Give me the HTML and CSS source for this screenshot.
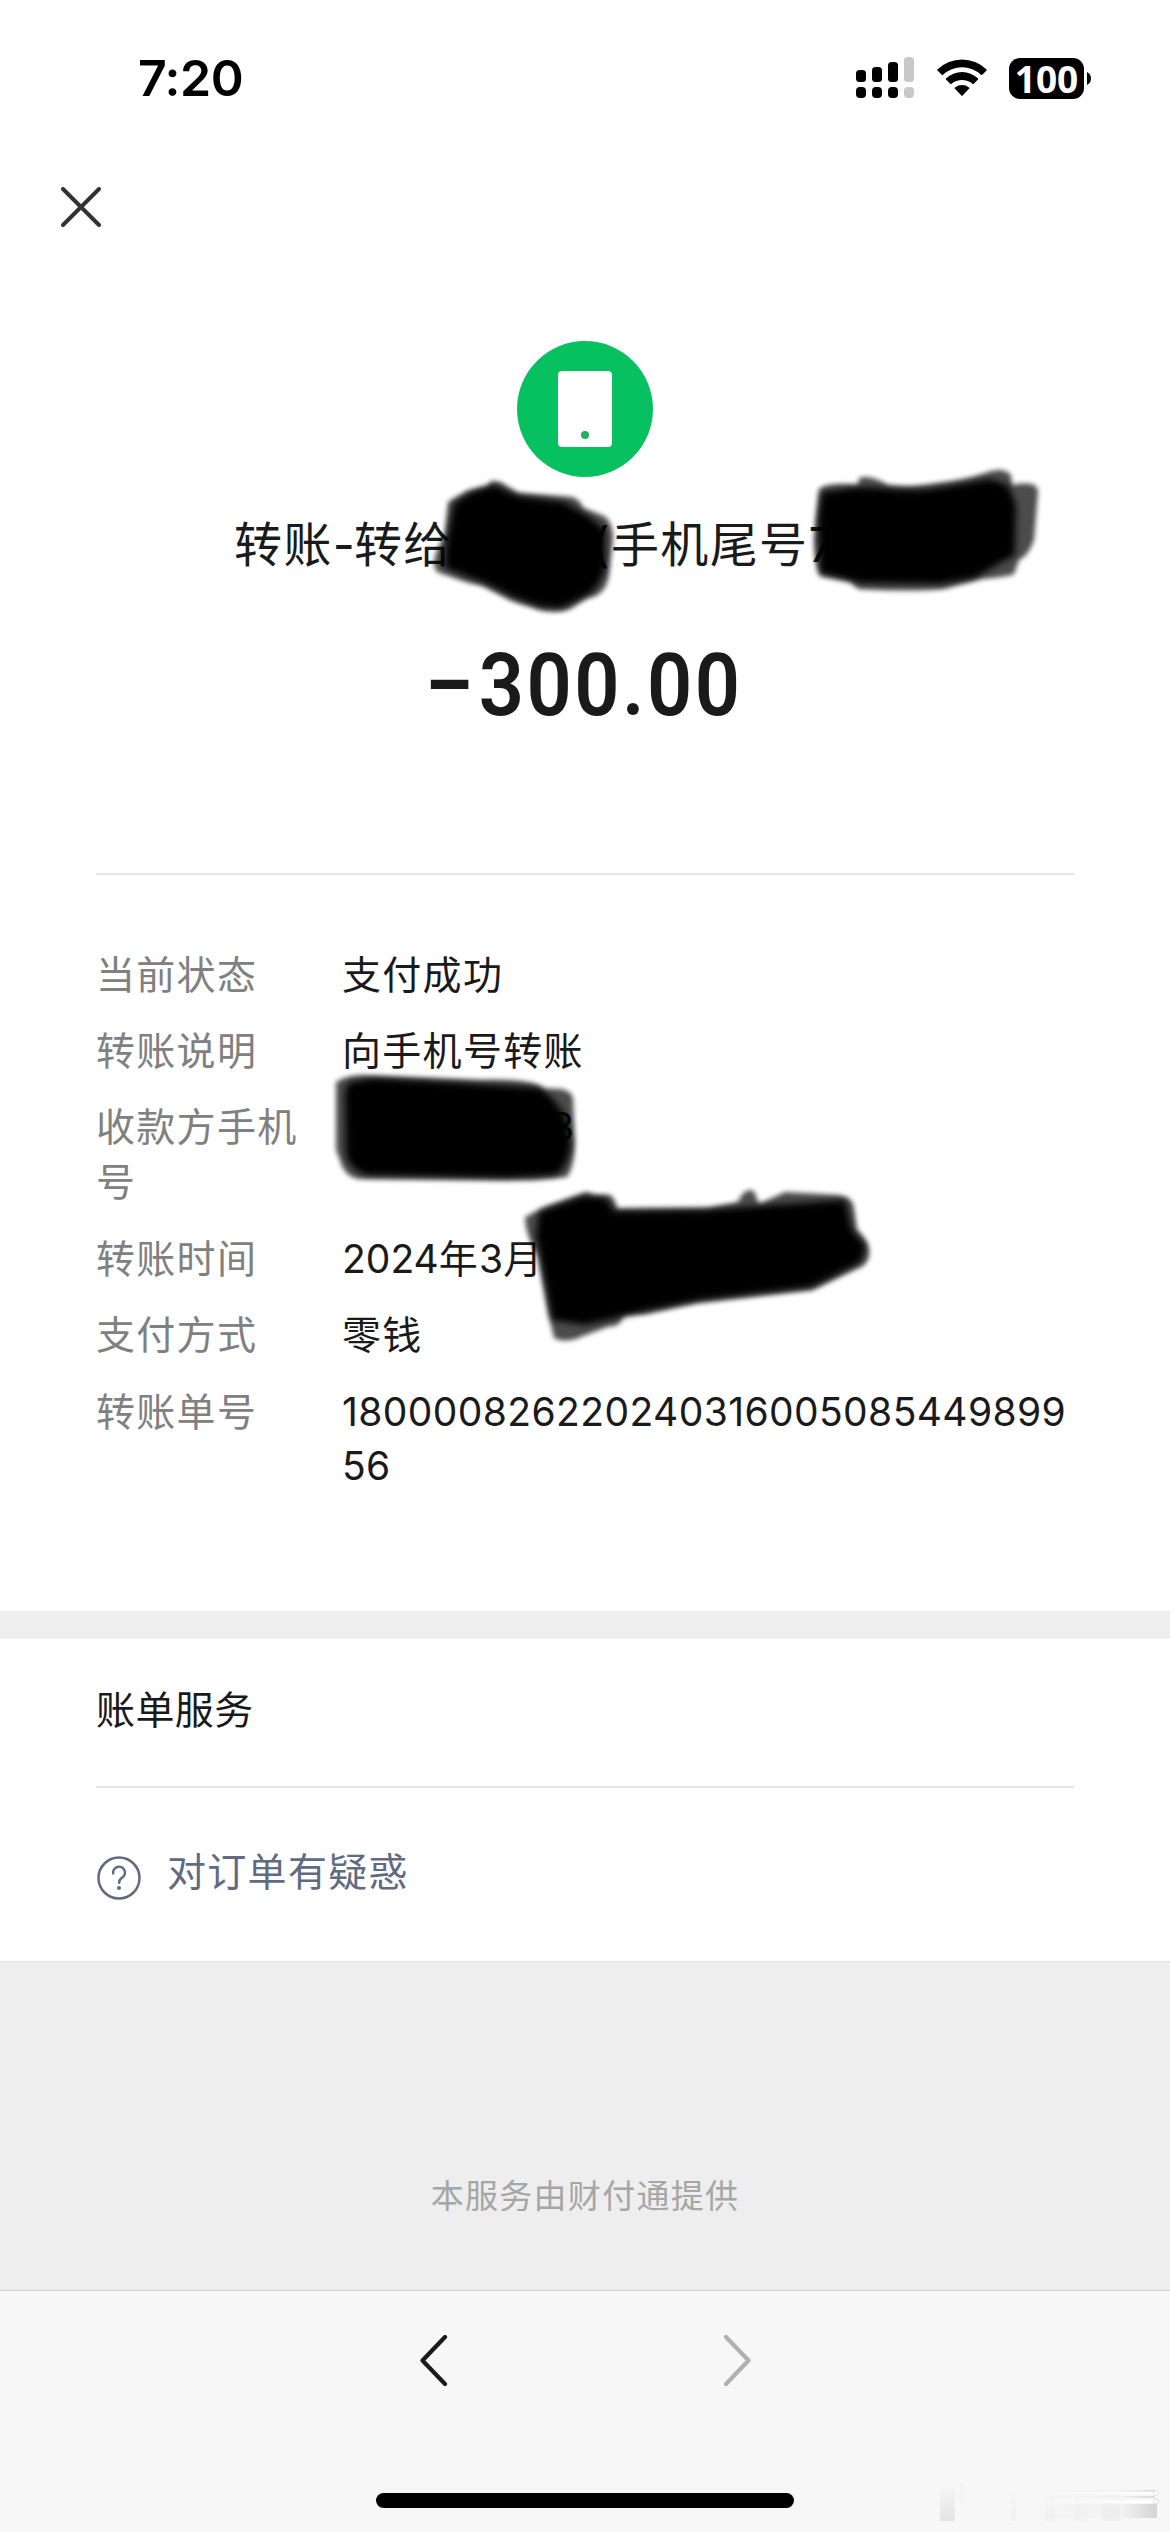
FILE: index.html
```html
<!DOCTYPE html>
<html lang="zh-CN">
<head>
<meta charset="utf-8">
<title>账单详情</title>
<link rel="stylesheet" href="styles.css">
</head>
<body>
<div class="screen">
  <header class="status-bar">
    <span class="clock">7:20</span>
    <div class="status-icons">
      <svg class="signal" width="60" height="42" viewBox="0 0 60 42">
        <rect x="0" y="13" width="10" height="12" rx="3.5"/>
        <rect x="16" y="10" width="10" height="15" rx="3.5"/>
        <rect x="32" y="5" width="10" height="20" rx="3.5"/>
        <rect x="48" y="0" width="10" height="25" rx="3.5" fill="#c8c8c8"/>
        <rect x="0" y="30" width="10" height="11" rx="4"/>
        <rect x="16" y="30" width="10" height="11" rx="4"/>
        <rect x="32" y="30" width="10" height="11" rx="4"/>
        <rect x="48" y="30" width="10" height="11" rx="4" fill="#c8c8c8"/>
      </svg>
      <svg class="wifi" width="50" height="38" viewBox="0 0 50 38">
        <path d="M0.500 11.500Q0 10.800 .7 10.200A35 35 0 0 1 49.300 10.200Q50 10.800 49.500 11.500L45.300 15.700Q44.700 16.200 44 15.700A28 28 0 0 0 6 15.700Q5.300 16.200 4.700 15.700Z"/>
        <path d="M9 20.500Q8.500 20 9.100 19.300A23.500 23.500 0 0 1 40.900 19.300Q41.500 20 41 20.500L36.800 24.700Q36.200 25.300 35.500 24.800A16.500 16.500 0 0 0 14.500 24.800Q13.800 25.300 13.200 24.700Z"/>
        <path d="M17.800 29.500Q17.400 28.900 18 28.400A11.500 11.500 0 0 1 32 28.400Q32.600 28.900 32.200 29.500L25.600 36.600Q25 37.200 24.400 36.600Z"/>
      </svg>
      <div class="battery"><span class="battery-level">100</span></div>
      <svg class="battery-nub" width="4" height="13" viewBox="0 0 4 13"><path d="M0 0Q4 2 4 6.500T0 13Z"/></svg>
    </div>
  </header>

  <nav class="nav-bar">
    <svg width="40" height="40" viewBox="0 0 40 40"><path d="M2 2L38 38M38 2L2 38" stroke="#333" stroke-width="4" stroke-linecap="round"/></svg>
  </nav>

  <section class="summary">
    <svg class="phone-icon" width="136" height="136" viewBox="0 0 136 136">
      <circle cx="68" cy="68" r="68" fill="#07c160"/>
      <rect x="41" y="30" width="54" height="76" rx="4" fill="#fff"/>
      <circle cx="68" cy="94" r="4" fill="#1fae62"/>
    </svg>
    <h1 class="title"><span class="title-payee">转账<span class="dash">-</span>转给</span><span>(手机尾号7</span></h1>
    <p class="amount"><span class="minus">−</span>300.00</p>
  </section>

  <dl class="details">
    <dt>当前状态</dt><dd>支付成功</dd>
    <dt>转账说明</dt><dd>向手机号转账</dd>
    <dt>收款方手机号</dt><dd class="phone-number">3</dd>
    <dt>转账时间</dt><dd><span class="num">2024</span>年<span class="num">3</span>月</dd>
    <dt>支付方式</dt><dd>零钱</dd>
    <dt>转账单号</dt><dd class="num order-number">18000082622024031600508544989956</dd>
  </dl>

  <section class="services">
    <h2 class="services-title">账单服务</h2>
    <div class="help">
      <svg width="44" height="44" viewBox="0 0 44 44" fill="none" stroke="#606a80" stroke-width="2.500">
        <circle cx="22" cy="22" r="20.500"/>
        <path d="M16.200 17.500A5.900 5.900 0 1 1 25.300 21.500Q22.100 23.500 22.100 26.800" stroke-linecap="round"/>
        <circle cx="22" cy="32" r="2" fill="#606a80" stroke="none"/>
      </svg>
      <span>对订单有疑惑</span>
    </div>
  </section>

  <footer class="provider">本服务由财付通提供</footer>

  <div class="toolbar">
    <div class="toolbar-buttons">
      <svg width="28" height="52" viewBox="0 0 28 52"><path d="M25 2L2.500 25.500L25 49" fill="none" stroke="#1a1a1a" stroke-width="4.200" stroke-linecap="round" stroke-linejoin="round"/></svg>
      <svg width="28" height="52" viewBox="0 0 28 52"><path d="M3 2L25.500 25.500L3 49" fill="none" stroke="#b0b0b0" stroke-width="4.200" stroke-linecap="round" stroke-linejoin="round"/></svg>
    </div>
    <div class="home-indicator"></div>
  </div>

  <svg class="scribbles" width="1170" height="2532" viewBox="0 0 1170 2532">
    <defs>
      <filter id="soft"><feGaussianBlur stdDeviation="2.600"/></filter>
      <filter id="softer"><feGaussianBlur stdDeviation="3.500"/></filter>
      <linearGradient id="fade" x1="0" y1="0" x2="0" y2="1"><stop offset="0" stop-color="#000" stop-opacity="0"/><stop offset="1" stop-color="#000" stop-opacity=".08"/></linearGradient>
      <linearGradient id="side" gradientUnits="userSpaceOnUse" x1="1015" y1="0" x2="1157" y2="0"><stop offset="0" stop-color="#000" stop-opacity="0"/><stop offset=".75" stop-color="#000" stop-opacity=".02"/><stop offset="1" stop-color="#000" stop-opacity=".14"/></linearGradient>
      <linearGradient id="shine" gradientUnits="userSpaceOnUse" x1="1040" y1="0" x2="1157" y2="0"><stop offset="0" stop-color="#fff" stop-opacity="0"/><stop offset="1" stop-color="#fff"/></linearGradient>
    </defs>
    <g filter="url(#soft)" fill-opacity=".7">
      <path d="M448 502L467 491L488 486L491 481L500 482L518 493L572 497Q581 500 583 508L604 516Q613 522 613 540L609 575Q606 596 587 598L570 609Q556 614 540 610L512 601L483 586L466 582L437 572Q432 565 436 553L445 533Z"/>
      <path d="M819 489Q828 482 858 485L859 478Q870 474 888 485Q910 488 938 483Q965 480 985 473Q1003 466 1011 475L1012 485Q1038 480 1038 492L1034 540Q1029 555 1019 560L1014 574Q1008 577 980 579L944 589Q910 592 858 589L850 581L820 576Q814 560 814 540Z"/>
      <path d="M336 1082Q350 1073 372 1076L480 1080Q533 1078 544 1089Q570 1086 573 1098L575 1140Q575 1165 567 1177L535 1180L358 1179Q344 1176 340 1160L336 1150Z"/>
      <path d="M525 1217L545 1207L587 1192L594 1195L610 1195Q616 1200 617 1209L708 1208L738 1202Q744 1187 754 1191L759 1204L785 1192L838 1195Q853 1197 854 1208L857 1230Q871 1242 869 1257Q866 1266 856 1269L812 1290L696 1303L645 1314L624 1315Q619 1328 610 1326L583 1336Q566 1344 554 1338L549 1316L538 1256Q525 1235 525 1217Z"/>
    </g>
    <g filter="url(#softer)">
      <path d="M454 503L472 492L494 485L518 496L564 502L590 517L605 530L605 570Q596 592 585 596L562 608L542 607L515 598L487 584L445 568L446 545Z"/>
      <path d="M822 492L860 487L880 488Q915 493 950 486L990 479L1008 485L1016 505L1015 555L1000 563L975 578L940 584L860 583L820 573L818 520Z"/>
      <path d="M348 1083L372 1078L460 1083L540 1088Q557 1100 567 1120L571 1145Q567 1168 556 1175L508 1178L367 1175Q350 1170 346 1155L345 1092Z"/>
      <path d="M539 1212L583 1196L606 1198L614 1211L706 1210L760 1206L845 1200L852 1230L866 1246L861 1262L812 1287L700 1300L640 1312L611 1319L585 1325L552 1320L541 1260L536 1236Z"/>
    </g>
    <g class="watermark">
      <rect x="940" y="2484" width="15" height="37" fill="url(#fade)"/>
      <rect x="960" y="2482" width="4" height="22" fill="#000" fill-opacity=".012"/>
      <rect x="1011" y="2488" width="5" height="33" fill="url(#fade)" opacity=".4"/>
      <rect x="1045" y="2488" width="10" height="33" fill="url(#fade)" opacity=".3"/>
      <rect x="1074" y="2488" width="14" height="33" fill="url(#fade)" opacity=".25"/>
      <rect x="1102" y="2488" width="18" height="33" fill="url(#fade)" opacity=".3"/>
      <rect x="1015" y="2504" width="142" height="14" fill="url(#side)"/>
      <rect x="1040" y="2490" width="115" height="1.500" fill="url(#side)"/>
      <rect x="1040" y="2496" width="115" height="2" fill="url(#side)"/>
      <rect x="1040" y="2492" width="115" height="2" fill="url(#shine)"/>
      <rect x="1040" y="2500" width="117" height="3" fill="url(#shine)"/>
      <circle cx="1156" cy="2493" r="2.500" fill="#fff" stroke="#e4e4e4"/>
      <circle cx="1156" cy="2501.500" r="2.500" fill="#fff" stroke="#ddd"/>
    </g>
  </svg>
</div>
</body>
</html>
```
FILE: styles.css
```css
* { box-sizing: border-box; }

body, h1, h2, p, dl, dt, dd { margin: 0; font-weight: 400; }

body {
  background: #ededed;
  color: #1a1a1a;
  font-family: Inter, "Noto Sans CJK SC", sans-serif;
}

.screen {
  position: relative;
  display: flex;
  flex-direction: column;
  width: 1170px;
  height: 2532px;
  overflow: hidden;
  background: #fff;
}

.status-bar {
  display: flex;
  justify-content: space-between;
  align-items: center;
  height: 156px;
  padding: 0 79px 0 138px;
  color: #000;
}

.clock {
  font-size: 50px;
  font-weight: 600;
  line-height: 60px;
  letter-spacing: -0.5px;
}

.status-icons {
  display: flex;
  align-items: center;
}

.wifi { margin-left: 21px; }

.battery {
  display: flex;
  align-items: center;
  justify-content: center;
  width: 75px;
  height: 41px;
  margin-left: 22px;
  border-radius: 11px;
  background: #000;
}

.battery-level {
  color: #fff;
  font-family: "Open Sans", sans-serif;
  font-size: 37px;
  font-weight: 700;
  line-height: 41px;
}

.battery-nub { margin-left: 3px; }

.nav-bar {
  display: flex;
  height: 185px;
  padding: 31px 0 0 61px;
}

.summary {
  display: flex;
  flex-direction: column;
  align-items: center;
  height: 534px;
  margin: 0 96px;
  border-bottom: 2px solid #e6e6e6;
}

.phone-icon { flex: none; }

.title {
  display: flex;
  align-self: stretch;
  margin-top: 38px;
  padding-left: 138px;
  font-size: 48px;
  line-height: 60px;
  letter-spacing: 1.4px;
  white-space: nowrap;
}

.title-payee { width: 358px; }

.dash { letter-spacing: -1px; }

.amount {
  margin-top: 60px;
  font-family: Roboto, sans-serif;
  font-size: 88px;
  font-weight: 600;
  line-height: 100px;
  letter-spacing: 2.8px;
  transform: scaleX(0.9);
}

.minus {
  display: inline-block;
  margin-right: 5px;
  transform: scaleX(1.13);
}

.details {
  display: grid;
  grid-template-columns: 206px 1fr;
  column-gap: 40px;
  row-gap: 21.9px;
  align-content: start;
  height: 736px;
  padding: 72.500px 96px 0;
  font-size: 39px;
  line-height: 54.600px;
  letter-spacing: 1.3px;
}

.details dt { color: #808080; }

.details dd { word-break: break-all; }

.details .num { letter-spacing: 0; }

.details .order-number { letter-spacing: 0.4px; }

.phone-number { padding-left: 208px; }

.services {
  height: 350px;
  padding: 0 96px;
  border-top: 28px solid #eee;
}

.services-title {
  height: 149px;
  padding-top: 43px;
  border-bottom: 2px solid #e6e6e6;
  font-size: 39px;
  line-height: 56px;
  letter-spacing: 0.4px;
}

.help {
  display: flex;
  align-items: center;
  padding-top: 55px;
  color: #606a80;
  font-size: 39px;
  line-height: 50px;
  letter-spacing: 1.3px;
}

.help svg { margin: 13px 26px 0 1px; }

.provider {
  height: 329px;
  padding-top: 214px;
  border-top: 1px solid #e2e2e2;
  background: #eee;
  color: #a6a6a6;
  font-size: 33px;
  line-height: 40px;
  letter-spacing: 1.3px;
  text-align: center;
}

.toolbar {
  display: flex;
  flex: 1;
  flex-direction: column;
  align-items: center;
  justify-content: space-between;
  padding: 44px 0 24px;
  border-top: 1px solid #d0d0d0;
  background: #f7f7f7;
}

.toolbar-buttons {
  display: flex;
  gap: 275px;
}

.home-indicator {
  width: 418px;
  height: 15px;
  border-radius: 8px;
  background: #000;
}

.scribbles {
  position: absolute;
  inset: 0;
  pointer-events: none;
}
```
